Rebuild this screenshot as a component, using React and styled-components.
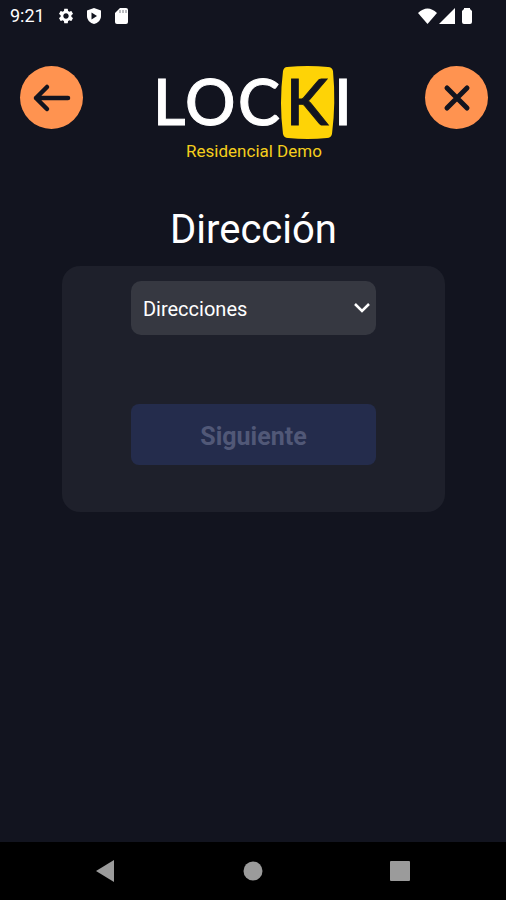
import React from "react";
import styled, { createGlobalStyle } from "styled-components";
import { MdSettings } from "react-icons/md";

const GlobalStyle = createGlobalStyle`
  *, *::before, *::after { box-sizing: border-box; }
  body { margin: 0; background: #12141f; font-family: Roboto, "Liberation Sans", sans-serif; }
`;

const Screen = styled.div`
  display: flex;
  flex-direction: column;
  min-height: 100vh;
  background: #12141f;
  color: #fff;
`;

const StatusBar = styled.div`
  display: flex;
  justify-content: space-between;
  align-items: center;
  height: 32px;
  padding: 0 30px 0 10px;
  font-size: 18px;
  line-height: 32px;
`;

const StatusGroup = styled.div`
  display: flex;
  align-items: center;
  gap: ${(p) => p.$gap}px;
  svg { display: block; }
`;

const Time = styled.span`
  width: 33px;
  white-space: nowrap;
`;

const Header = styled.header`
  display: flex;
  justify-content: space-between;
  align-items: flex-start;
  padding: 34px 18px 0 20px;
`;

const RoundButton = styled.button`
  display: grid;
  place-items: center;
  width: 63px;
  height: 63px;
  padding: 0;
  border: 0;
  border-radius: 50%;
  background: #ff9350;
  color: #12141f;
  cursor: pointer;
`;

const Brand = styled.div`
  display: flex;
  flex-direction: column;
  align-items: center;
`;

const LogoDrawing = styled.svg`
  display: block;
  overflow: visible;
  font-family: Lato, sans-serif;
  font-weight: 500;
`;

const Subtitle = styled.p`
  margin: 0;
  font-size: 17px;
  line-height: 22px;
  color: #f5cf1c;
`;

const Main = styled.main`
  display: flex;
  flex: 1;
  flex-direction: column;
  padding: 42px 61px 0 62px;
`;

const Title = styled.h1`
  margin: 0 0 10px;
  font-size: 40px;
  font-weight: 400;
  line-height: 52px;
  text-align: center;
`;

const Card = styled.form`
  display: flex;
  flex-direction: column;
  gap: 69px;
  padding: 15px 18% 47px;
  border-radius: 18px;
  background: #1e202b;
`;

const SelectField = styled.div`
  display: grid;
  align-items: center;
  > * { grid-area: 1 / 1; }
  svg { justify-self: end; margin-right: 5px; pointer-events: none; }
`;

const Select = styled.select`
  appearance: none;
  width: 100%;
  height: 54px;
  padding: 2px 36px 0 12px;
  border: 0;
  border-radius: 10px;
  background: #363841;
  color: #fff;
  font: 400 20px/26px Roboto, sans-serif;
`;

const SubmitButton = styled.button`
  height: 61px;
  padding: 4px 0 0;
  border: 0;
  border-radius: 8px;
  background: #242c4c;
  color: #515877;
  font: 700 25px/30px Roboto, sans-serif;
`;

const NavBar = styled.nav`
  display: flex;
  justify-content: space-around;
  align-items: center;
  height: 58px;
  padding: 0 33px;
  background: #000;
`;

const NavButton = styled.button`
  display: grid;
  place-items: center;
  width: 48px;
  height: 48px;
  padding: 0;
  border: 0;
  background: none;
  color: #9b9b9b;
`;

function Logo() {
  return (
    <LogoDrawing width="194" height="74" viewBox="0 0 194 74" role="img" aria-label="LOCKI">
      <text x="-4 28 81" y="59" fontSize="63" fill="#fff" stroke="#fff" strokeWidth="1">LOC</text>
      <path
        d="M130 1Q151 -1 171 1Q175 1 176 5Q179 37 175 68Q174 72 170 72Q151 74 131 72Q127 72 126 68Q122 37 126 5Q127 1 130 1Z"
        fill="#fed306"
      />
      <text x="129" y="59" fontSize="63" fill="#12141f" stroke="#12141f" strokeWidth="1">K</text>
      <text x="177" y="59" fontSize="63" fill="#fff" stroke="#fff" strokeWidth="1">I</text>
    </LogoDrawing>
  );
}

export default function App() {
  return (
    <Screen>
      <GlobalStyle />
      <StatusBar>
        <StatusGroup $gap={14}>
          <Time>9:21</Time>
          <StatusGroup $gap={10}>
            <MdSettings size={18} />
            <svg width="18" height="18" viewBox="0 0 18 18">
              <path d="M9 1 2 3.5V9c0 4 3 7 7 8 4-1 7-4 7-8V3.500Z" fill="#fff" />
              <path d="M6.500 5.500v7L12 9Z" fill="#12141f" />
            </svg>
            <svg width="18" height="18" viewBox="0 0 18 18">
              <path d="M7 1h6a2 2 0 0 1 2 2v12a2 2 0 0 1-2 2H4a2 2 0 0 1-2-2V6Z" fill="#fff" />
              <path d="M7 3v3M10 3v3M13 3v3" stroke="#777a82" strokeWidth="1" />
            </svg>
          </StatusGroup>
        </StatusGroup>
        <StatusGroup $gap={2}>
          <svg width="19" height="17" viewBox="0 0 19 17">
            <path d="M0 5Q9.500-4 19 5L9.500 16Z" fill="#fff" />
          </svg>
          <svg width="17" height="17" viewBox="0 0 17 17">
            <path d="M16 0v16H0Z" fill="#fff" />
          </svg>
          <svg width="18" height="18" viewBox="0 0 18 18">
            <path d="M6 2V1h6v1l2 2v11a2 2 0 0 1-2 2H6a2 2 0 0 1-2-2V4Z" fill="#fff" />
          </svg>
        </StatusGroup>
      </StatusBar>
      <Header>
        <RoundButton type="button" aria-label="Volver">
          <svg width="40" height="32" viewBox="0 0 40 32" fill="none" stroke="currentColor" strokeWidth="4.500" strokeLinecap="round" strokeLinejoin="round">
            <path d="M36 16H4M15 5 4 16l11 11" />
          </svg>
        </RoundButton>
        <Brand>
          <Logo />
          <Subtitle>Residencial Demo</Subtitle>
        </Brand>
        <RoundButton type="button" aria-label="Cerrar">
          <svg width="32" height="32" viewBox="0 0 32 32" fill="none" stroke="currentColor" strokeWidth="5" strokeLinecap="round">
            <path d="M6 6l20 20M26 6 6 26" />
          </svg>
        </RoundButton>
      </Header>
      <Main>
        <Title>Dirección</Title>
        <Card>
          <SelectField>
            <Select aria-label="Direcciones" defaultValue="">
              <option value="">Direcciones</option>
            </Select>
            <svg width="18" height="14" viewBox="0 0 18 14" fill="none" stroke="#fff" strokeWidth="2.500">
              <path d="M2 3l7 7 7-7" />
            </svg>
          </SelectField>
          <SubmitButton type="submit" disabled>Siguiente</SubmitButton>
        </Card>
      </Main>
      <NavBar>
        <NavButton type="button" aria-label="Atrás">
          <svg width="20" height="22" viewBox="0 0 20 22"><path d="M0 11 18 0v22Z" fill="currentColor" /></svg>
        </NavButton>
        <NavButton type="button" aria-label="Inicio">
          <svg width="20" height="20" viewBox="0 0 20 20"><circle cx="10" cy="10" r="9.500" fill="currentColor" /></svg>
        </NavButton>
        <NavButton type="button" aria-label="Recientes">
          <svg width="20" height="20" viewBox="0 0 20 20"><rect width="20" height="20" rx="1" fill="currentColor" /></svg>
        </NavButton>
      </NavBar>
    </Screen>
  );
}
